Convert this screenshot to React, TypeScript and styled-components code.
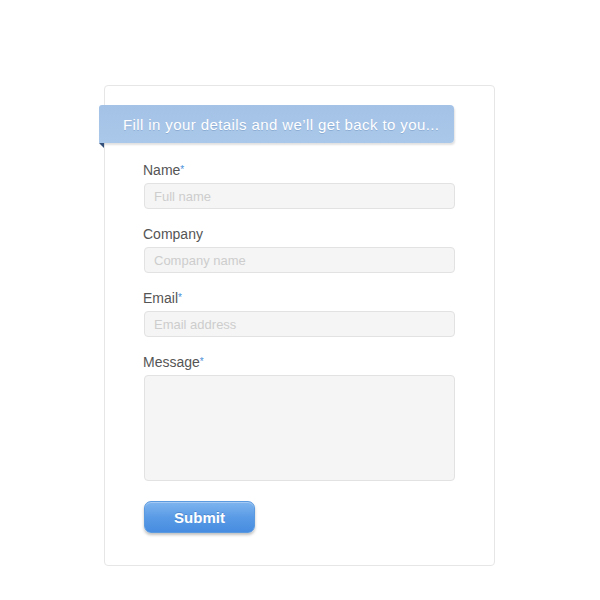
import React from "react";
import styled, { createGlobalStyle } from "styled-components";

const Global = createGlobalStyle`
  html, body { margin: 0; padding: 0; background: #ffffff; }
  body { font-family: "Liberation Sans", Arial, Helvetica, sans-serif; }
  * { box-sizing: border-box; }
`;

const Page = styled.div`
  padding: 85px 0 0 104px;
`;

const Card = styled.div`
  width: 391px;
  height: 481px;
  border: 1px solid #e6e6e6;
  border-radius: 4px;
  background: #fff;
  padding: 19px 0 31px;
`;

const Ribbon = styled.div`
  position: relative;
  margin-left: -6px;
  width: 355px;
  height: 38px;
  display: flex;
  align-items: center;
  padding-left: 24px;
  background: linear-gradient(180deg, #a3c2e6 0%, #aac8e9 100%);
  border-radius: 3px 4px 4px 0;
  box-shadow: 1px 2px 2px rgba(0, 0, 0, 0.12);
  color: #fff;
  font-size: 15px;
  letter-spacing: 0.4px;
  text-shadow: 0 1px 0 rgba(60, 100, 150, 0.25);
  &::after {
    content: "";
    position: absolute;
    left: 0;
    bottom: -5px;
    width: 0;
    height: 0;
    border-top: 5px solid #34507a;
    border-left: 5px solid transparent;
  }
`;

const Form = styled.form`
  display: flex;
  flex-direction: column;
  padding: 19px 0 0 39px;
  width: 351px;
`;

const Field = styled.div`
  display: flex;
  flex-direction: column;
  gap: 4px;
  margin-bottom: 17px;
`;

const Label = styled.label`
  margin-left: -1px;
  font-size: 14px;
  line-height: 17px;
  color: #555;
`;

const Star = styled.span`
  color: #4a90d9;
  font-size: 10px;
  vertical-align: top;
  position: relative;
  top: -1px;
`;

const Input = styled.input`
  width: 311px;
  height: 26px;
  border: 1px solid #e2e2e2;
  border-radius: 4px;
  background: #f5f5f5;
  padding: 0 9px;
  font-family: inherit;
  font-size: 13px;
  color: #555;
  outline: none;
  &::placeholder { color: #cdcdcd; }
`;

const TextArea = styled.textarea`
  width: 311px;
  height: 106px;
  border: 1px solid #e2e2e2;
  border-radius: 4px;
  background: #f5f5f5;
  resize: none;
  outline: none;
  font-family: inherit;
  display: block;
`;

const Button = styled.button`
  margin-top: 3px;
  width: 111px;
  height: 32px;
  border: 1px solid #5c9ae0;
  border-radius: 7px;
  background: linear-gradient(180deg, #7fb5ef 0%, #5a9be6 50%, #468ce0 100%);
  box-shadow: 0 2px 3px rgba(0, 0, 0, 0.25), inset 0 1px 0 rgba(255, 255, 255, 0.3);
  color: #fff;
  font-family: inherit;
  font-weight: bold;
  font-size: 15px;
  text-shadow: 0 -1px 0 rgba(40, 90, 160, 0.35);
  cursor: pointer;
`;

const fields = [
  { label: "Name", req: true, ph: "Full name" },
  { label: "Company", req: false, ph: "Company name" },
  { label: "Email", req: true, ph: "Email address" },
];

export default function App() {
  return (
    <>
      <Global />
      <Page>
        <Card>
          <Ribbon>Fill in your details and we’ll get back to you...</Ribbon>
          <Form onSubmit={(e) => e.preventDefault()}>
            {fields.map((f) => (
              <Field key={f.label}>
                <Label>
                  {f.label}
                  {f.req && <Star>*</Star>}
                </Label>
                <Input placeholder={f.ph} />
              </Field>
            ))}
            <Field>
              <Label>
                Message<Star>*</Star>
              </Label>
              <TextArea />
            </Field>
            <Button type="submit">Submit</Button>
          </Form>
        </Card>
      </Page>
    </>
  );
}
